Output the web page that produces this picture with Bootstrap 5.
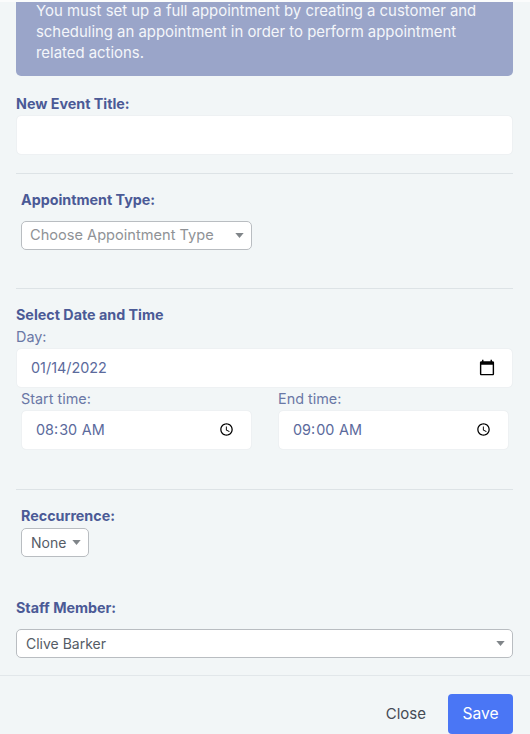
<!DOCTYPE html>
<html lang="en">
<head>
  <meta charset="UTF-8">
  <title>New Event</title>
  <meta name="viewport" content="width=device-width, initial-scale=1">
  <link href="https://cdn.jsdelivr.net/npm/bootstrap@5.3.3/dist/css/bootstrap.min.css" rel="stylesheet">
  <style>
    html, body { height: 734px; overflow: hidden; }
    body { background: #f2f6f7; font-family: Inter, "Noto Sans", sans-serif; font-size: 14px; color: #5b6a9c; border-top: 2px solid #fbfcfc; }
    .event-sheet { padding: 0 17px 0 16px; height: 674px; }
    .notice-box { background: #9aa5c9; color: #f4f6fa; border-radius: 0 0 5px 5px; padding: 0 20px; margin-top: -1px; margin-bottom: 18px; font-size: 14.9px; line-height: 21px; height: 75px; }
    .field-title { display: block; font-weight: 700; font-size: 14.3px; line-height: 20px; color: #4b5a96; margin: 0; }
    .field-plain { display: block; font-size: 14.4px; line-height: 20px; color: #6a78a6; margin: 0; }
    .text-field { border: 1px solid #eef1f3; border-radius: 5px; height: 40px; background-color: #fff; color: #5b6a9c; font-size: 14.4px; padding: 0 14px; margin-top: 1px; box-shadow: none; }
    .text-field::-webkit-calendar-picker-indicator { margin-right: 0; }
    .date-field::-webkit-calendar-picker-indicator { width: 18px; height: 18px; }
    .sheet-rule { margin: 0; border: 0; border-top: 1px solid #dde3e6; opacity: 1; }
    .rule-first { margin-top: 18px; }
    .rule-wide { margin-top: 38px; }
    .rule-after-time { margin-top: 39px; }
    .inset-left { padding-left: 5px; }
    .label-gap { margin-bottom: 11px; }
    .label-tight { margin-bottom: 2px; }
    .pick-field { height: 29px; min-height: 0; padding: 0 24px 0 9px; border: 1px solid #b9bdc1; border-radius: 5px; font-size: 14px; color: #555c66; background-color: #fff; box-shadow: none;
      background-image: url("data:image/svg+xml,%3csvg xmlns='http://www.w3.org/2000/svg' viewBox='0 0 10 6'%3e%3cpath fill='%23808589' d='M0 0h10L5 6z'/%3e%3c/svg%3e");
      background-size: 9px 5px; background-position: right 7px center; }
    .pick-muted { color: #8f9296; width: 231px; font-size: 14.6px; padding-left: 8px; }
    .pick-short { width: 68px; padding-right: 16px; }
    .time-row { --bs-gutter-x: 26px; padding: 0 4px 0 5px; margin-top: 1px; }
    .label-staff { margin-top: 41px; }
    .sheet-foot { border-top: 1px solid #e2e7ea; height: 60px; padding: 17px 17px 0 0; gap: 22px; }
    .foot-close { color: #454b55; font-size: 15px; }
    .foot-save { background: #4a76f5; color: #fff; border: 0; border-radius: 4px; width: 65px; height: 40px; font-size: 15.6px; font-family: inherit; padding: 0; }
  </style>
</head>
<body>
  <div class="event-sheet">
    <div class="notice-box">You must set up a full appointment by creating a customer and scheduling an appointment in order to perform appointment related actions.</div>

    <label class="field-title" for="eventTitle">New Event Title:</label>
    <input type="text" id="eventTitle" class="form-control text-field">
    <hr class="sheet-rule rule-first">

    <div class="inset-left pt-3">
      <label class="field-title label-gap" for="apptType">Appointment Type:</label>
      <select id="apptType" class="form-select pick-field pick-muted">
        <option>Choose Appointment Type</option>
      </select>
    </div>
    <hr class="sheet-rule rule-wide">

    <div class="pt-3">
      <div class="field-title label-tight">Select Date and Time</div>
      <label class="field-plain" for="eventDay">Day:</label>
      <input type="date" id="eventDay" class="form-control text-field date-field" value="2022-01-14">
      <div class="row time-row">
        <div class="col-6">
          <label class="field-plain" for="startTime">Start time:</label>
          <input type="time" id="startTime" class="form-control text-field" value="08:30">
        </div>
        <div class="col-6">
          <label class="field-plain" for="endTime">End time:</label>
          <input type="time" id="endTime" class="form-control text-field" value="09:00">
        </div>
      </div>
    </div>
    <hr class="sheet-rule rule-after-time">

    <div class="inset-left pt-3">
      <label class="field-title label-tight" for="repeatKind">Reccurrence:</label>
      <select id="repeatKind" class="form-select pick-field pick-short">
        <option>None</option>
      </select>
    </div>

    <label class="field-title label-staff label-gap" for="staffMember">Staff Member:</label>
    <select id="staffMember" class="form-select pick-field">
      <option>Clive Barker</option>
    </select>
  </div>

  <div class="sheet-foot d-flex justify-content-end align-items-center">
    <span class="foot-close">Close</span>
    <button type="button" class="btn foot-save">Save</button>
  </div>
</body>
</html>
